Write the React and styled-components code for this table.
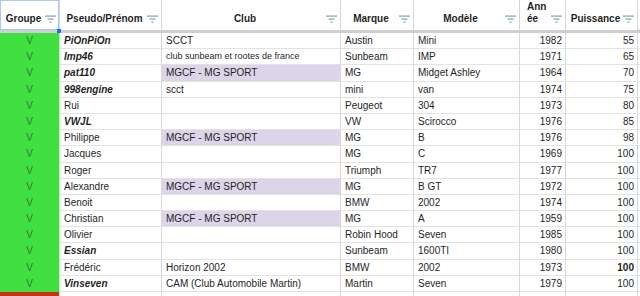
import React from 'react';
import styled, { createGlobalStyle } from 'styled-components';

const COLS = '60px 102px 179px 73px 106px 46px 72px 1fr';

const rows = [
  { pseudo: 'PiOnPiOn', strong: true, club: 'SCCT', marque: 'Austin', modele: 'Mini', annee: 1982, puissance: 55 },
  { pseudo: 'Imp46', strong: true, club: 'club sunbeam et rootes de france', small: true, marque: 'Sunbeam', modele: 'IMP', annee: 1971, puissance: 65 },
  { pseudo: 'pat110', strong: true, club: 'MGCF - MG SPORT', mgcf: true, marque: 'MG', modele: 'Midget Ashley', annee: 1964, puissance: 70 },
  { pseudo: '998engine', strong: true, club: 'scct', marque: 'mini', modele: 'van', annee: 1974, puissance: 75 },
  { pseudo: 'Rui', club: '', marque: 'Peugeot', modele: '304', annee: 1973, puissance: 80 },
  { pseudo: 'VWJL', strong: true, club: '', marque: 'VW', modele: 'Scirocco', annee: 1976, puissance: 85 },
  { pseudo: 'Philippe', club: 'MGCF - MG SPORT', mgcf: true, marque: 'MG', modele: 'B', annee: 1976, puissance: 98 },
  { pseudo: 'Jacques', club: '', marque: 'MG', modele: 'C', annee: 1969, puissance: 100 },
  { pseudo: 'Roger', club: '', marque: 'Triumph', modele: 'TR7', annee: 1977, puissance: 100 },
  { pseudo: 'Alexandre', club: 'MGCF - MG SPORT', mgcf: true, marque: 'MG', modele: 'B GT', annee: 1972, puissance: 100 },
  { pseudo: 'Benoit', club: '', marque: 'BMW', modele: '2002', annee: 1974, puissance: 100 },
  { pseudo: 'Christian', club: 'MGCF - MG SPORT', mgcf: true, marque: 'MG', modele: 'A', annee: 1959, puissance: 100 },
  { pseudo: 'Olivier', club: '', marque: 'Robin Hood', modele: 'Seven', annee: 1985, puissance: 100 },
  { pseudo: 'Essian', strong: true, club: '', marque: 'Sunbeam', modele: '1600TI', annee: 1980, puissance: 100 },
  { pseudo: 'Frédéric', club: 'Horizon 2002', marque: 'BMW', modele: '2002', annee: 1973, puissance: 100, boldPower: true },
  { pseudo: 'Vinseven', strong: true, club: 'CAM (Club Automobile Martin)', marque: 'Martin', modele: 'Seven', annee: 1979, puissance: 100 },
];

function FilterIcon() {
  return (
    <FilterSvg width="11" height="8" viewBox="0 0 11 8">
      <rect x="0" y="0.5" width="11" height="1.2" />
      <rect x="2.5" y="3.5" width="6" height="1.2" />
      <rect x="4.5" y="6.5" width="2" height="1.2" />
    </FilterSvg>
  );
}

function HeadCell({ children, selected, left }) {
  return (
    <Head $selected={selected}>
      <HeadLabel $left={left}>{children}</HeadLabel>
      <FilterIcon />
      {selected && <Handle />}
    </Head>
  );
}

export default function App() {
  return (
    <>
      <GlobalStyle />
      <Sheet>
        <HeaderRow>
          <HeadCell selected>Groupe</HeadCell>
          <HeadCell>Pseudo/Prénom</HeadCell>
          <HeadCell>Club</HeadCell>
          <HeadCell>Marque</HeadCell>
          <HeadCell>Modèle</HeadCell>
          <HeadCell left>Ann<br />ée</HeadCell>
          <HeadCell>Puissance</HeadCell>
          <Blank />
        </HeaderRow>
        {rows.map(r => (
          <Row key={r.pseudo}>
            <GroupCell>V</GroupCell>
            <Cell $strong={r.strong}>{r.pseudo}</Cell>
            <Cell $purple={r.mgcf} $small={r.small}>{r.club}</Cell>
            <Cell>{r.marque}</Cell>
            <Cell>{r.modele}</Cell>
            <Cell $right>{r.annee}</Cell>
            <Cell $right $bold={r.boldPower}>{r.puissance}</Cell>
            <Blank />
          </Row>
        ))}
        <Row>
          <GroupCell $red />
          <Cell />
          <Cell />
          <Cell />
          <Cell />
          <Cell />
          <Cell />
          <Blank />
        </Row>
      </Sheet>
    </>
  );
}

const GlobalStyle = createGlobalStyle`
  html, body {
    margin: 0;
    padding: 0;
    background: #ffffff;
    overflow: hidden;
  }
  body {
    font-family: "Liberation Sans", Arial, sans-serif;
  }
`;

const Sheet = styled.div`
  width: 640px;
  height: 296px;
  overflow: hidden;
  background: #ffffff;
`;

const HeaderRow = styled.div`
  display: grid;
  grid-template-columns: ${COLS};
  height: 33px;
  box-sizing: border-box;
  border-bottom: 3px solid #cfcfcf;
`;

const Head = styled.div`
  position: relative;
  display: flex;
  align-items: flex-end;
  padding: 0 3px 5px 4px;
  box-sizing: border-box;
  border-right: 1px solid #d6d6d6;
  ${p => p.$selected && `
    box-shadow: inset 0 0 0 1px #a8c7fa;
  `}
`;

const HeadLabel = styled.div`
  flex: 1;
  font-size: 10px;
  line-height: 12px;
  font-weight: bold;
  color: #1f1f1f;
  text-align: ${p => (p.$left ? 'left' : 'center')};
  padding-left: ${p => (p.$left ? '3px' : '0')};
  white-space: nowrap;
`;

const FilterSvg = styled.svg`
  flex: none;
  margin: 0 0 2px 2px;
  fill: #7fa3a3;
`;

const Handle = styled.span`
  position: absolute;
  right: -2px;
  bottom: -3px;
  width: 4px;
  height: 4px;
  background: #1a73e8;
  z-index: 1;
`;

const Row = styled.div`
  display: grid;
  grid-template-columns: ${COLS};
  height: 16.2px;
`;

const Cell = styled.div`
  box-sizing: border-box;
  border-right: 1px solid #d9d9d9;
  border-bottom: 1px solid #e3e3e3;
  padding: 0 3px 0 4px;
  font-size: ${p => (p.$small ? '9px' : '10px')};
  line-height: 15px;
  color: #1f1f1f;
  font-weight: ${p => (p.$strong || p.$bold ? 'bold' : 'normal')};
  font-style: ${p => (p.$strong ? 'italic' : 'normal')};
  text-align: ${p => (p.$right ? 'right' : 'left')};
  background: ${p => (p.$purple ? '#dcd5ea' : 'transparent')};
  white-space: nowrap;
  overflow: hidden;
`;

const GroupCell = styled.div`
  box-sizing: border-box;
  border-right: 1px solid #d9d9d9;
  background: ${p => (p.$red ? '#c8331c' : '#3fe03f')};
  font-size: 10px;
  line-height: 15px;
  color: #2f7a2f;
  text-align: center;
`;

const Blank = styled.div`
  border-bottom: 1px solid #e3e3e3;
`;
